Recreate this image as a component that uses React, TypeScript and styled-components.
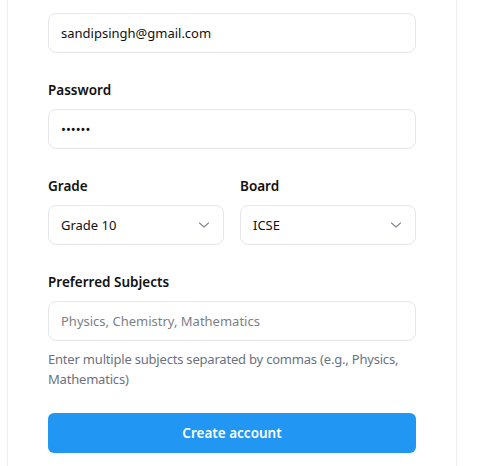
import React from "react";
import styled, { createGlobalStyle } from "styled-components";

const Global = createGlobalStyle`
  html, body { margin: 0; padding: 0; background: #ffffff; }
  body { font-family: "Noto Sans", "Open Sans", sans-serif; color: #111827; overflow: hidden; }
  * { box-sizing: border-box; }
`;

const Page = styled.div`
  width: 478px;
  height: 466px;
  overflow: hidden;
  padding-left: 7px;
`;

const Card = styled.form`
  width: 450px;
  margin-top: -21px;
  padding: 33px 40px 40px;
  background: #ffffff;
  border: 1px solid #f0f0f0;
  border-radius: 8px;
  box-shadow: 0 1px 3px rgba(0, 0, 0, 0.04);
  display: flex;
  flex-direction: column;
  gap: 27px;
`;

const Field = styled.div`
  display: flex;
  flex-direction: column;
`;

const Row = styled.div`
  display: grid;
  grid-template-columns: 1fr 1fr;
  gap: 16px;
`;

const Label = styled.label`
  font-size: 13.5px;
  line-height: 21px;
  font-weight: 600;
  color: #111111;
  margin-bottom: 8px;
`;

const Input = styled.input`
  width: 100%;
  height: 40px;
  padding: 0 12px;
  border: 1px solid #e5e7eb;
  border-radius: 8px;
  font-family: inherit;
  font-size: 13px;
  color: #111111;
  background: #ffffff;
  outline: none;
  &::placeholder { color: #7b7f86; }
`;

const SelectWrap = styled.div`
  position: relative;
`;

const Select = styled.select`
  width: 100%;
  height: 40px;
  padding: 0 32px 0 12px;
  border: 1px solid #e5e7eb;
  border-radius: 8px;
  font-family: inherit;
  font-size: 13px;
  color: #111111;
  background: #ffffff;
  appearance: none;
  outline: none;
`;

const Chevron = styled.svg`
  position: absolute;
  right: 14px;
  top: 15px;
  width: 12px;
  height: 10px;
  pointer-events: none;
`;

const Help = styled.p`
  margin: 8px 0 0;
  font-size: 13px;
  letter-spacing: -0.2px;
  line-height: 20px;
  color: #6b7280;
`;

const Submit = styled.button`
  height: 40px;
  margin-top: -3px;
  border: none;
  border-radius: 6px;
  background: #2196f3;
  color: #ffffff;
  font-family: inherit;
  font-size: 13.5px;
  font-weight: 600;
  cursor: pointer;
`;

const Down = () => (
  <Chevron viewBox="0 0 12 10" fill="none">
    <path d="M1.5 3 L6 7 L10.5 3" stroke="#8a8f96" strokeWidth="1.3" strokeLinecap="round" strokeLinejoin="round" />
  </Chevron>
);

export default function App() {
  return (
    <>
      <Global />
      <Page>
        <Card onSubmit={(e) => e.preventDefault()}>
          <Field>
            <Input type="email" readOnly value="sandipsingh@gmail.com" />
          </Field>
          <Field>
            <Label>Password</Label>
            <Input type="password" readOnly value="123456" />
          </Field>
          <Row>
            <Field>
              <Label>Grade</Label>
              <SelectWrap>
                <Select defaultValue="10">
                  <option value="10">Grade 10</option>
                </Select>
                <Down />
              </SelectWrap>
            </Field>
            <Field>
              <Label>Board</Label>
              <SelectWrap>
                <Select defaultValue="ICSE">
                  <option value="ICSE">ICSE</option>
                </Select>
                <Down />
              </SelectWrap>
            </Field>
          </Row>
          <Field>
            <Label>Preferred Subjects</Label>
            <Input type="text" placeholder="Physics, Chemistry, Mathematics" />
            <Help>Enter multiple subjects separated by commas (e.g., Physics, Mathematics)</Help>
          </Field>
          <Submit type="submit">Create account</Submit>
        </Card>
      </Page>
    </>
  );
}
